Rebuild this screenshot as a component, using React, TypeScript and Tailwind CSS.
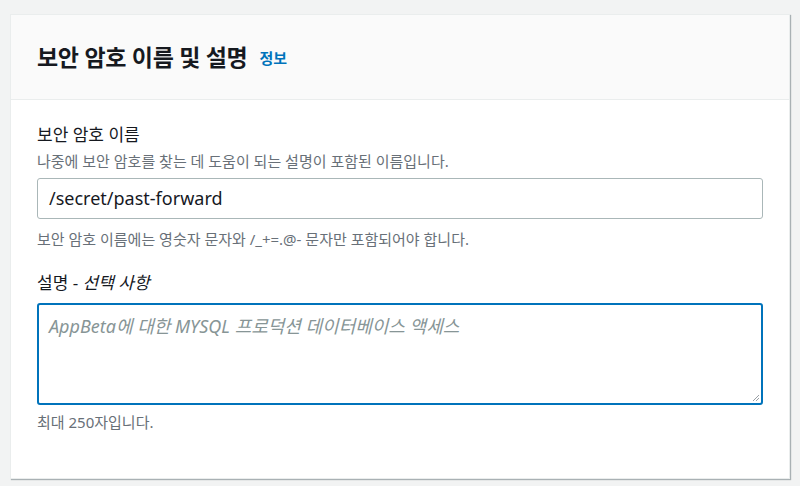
const font = {
  fontFamily: '"Noto Sans", "Noto Sans CJK KR", sans-serif',
}

const App = () => {
  return (
    <div
      className="w-[800px] h-[486px] bg-[#f2f3f3] pt-[14px] pl-[10px] pr-[10px] overflow-hidden"
      style={font}
    >
      <div className="bg-white border border-[#eaeded] shadow-[1px_1px_1px_0_rgba(0,28,36,0.3)] h-[465px]">
        {/* 헤더 */}
        <div className="bg-[#fafafa] border-b border-[#eaeded] h-[85px] flex items-center pl-[26px]">
          <h2 className="text-[23px] font-bold text-[#16191f] tracking-[-0.3px]">
            보안 암호 이름 및 설명
          </h2>
          <a className="ml-[12px] mt-[2px] text-[15px] font-bold text-[#0073bb]">정보</a>
        </div>

        {/* 본문 */}
        <div className="px-[26px] pt-[23px]">
          <div className="text-[17px] text-[#16191f] leading-[24px]">보안 암호 이름</div>
          <div className="text-[15px] text-[#687078] leading-[20px] mt-[4px]">
            나중에 보안 암호를 찾는 데 도움이 되는 설명이 포함된 이름입니다.
          </div>
          <div className="mt-[7px] h-[41px] border border-[#aab7b8] rounded-[3px] flex items-center px-[11px] text-[18px] text-[#16191f]">
            /secret/past-forward
          </div>
          <div className="text-[15px] text-[#687078] leading-[20px] mt-[10px]">
            보안 암호 이름에는 영숫자 문자와 /_+=.@- 문자만 포함되어야 합니다.
          </div>

          <div className="text-[17px] text-[#16191f] leading-[24px] mt-[22px]">
            설명 - <i>선택 사항</i>
          </div>
          <div className="mt-[8px] h-[102px] border-2 border-[#0073bb] rounded-[3px] relative px-[10px] pt-[8px]">
            <span className="text-[18px] italic text-[#879596]">
              AppBeta에 대한 MYSQL 프로덕션 데이터베이스 액세스
            </span>
            <svg className="absolute right-[1px] bottom-[1px]" width="8" height="8" viewBox="0 0 8 8">
              <path d="M7 1L1 7M7 4L4 7" stroke="#9aa0a6" strokeWidth="1" />
            </svg>
          </div>
          <div className="text-[15px] text-[#687078] leading-[20px] mt-[7px]">최대 250자입니다.</div>
        </div>
      </div>
    </div>
  )
}

export default App
